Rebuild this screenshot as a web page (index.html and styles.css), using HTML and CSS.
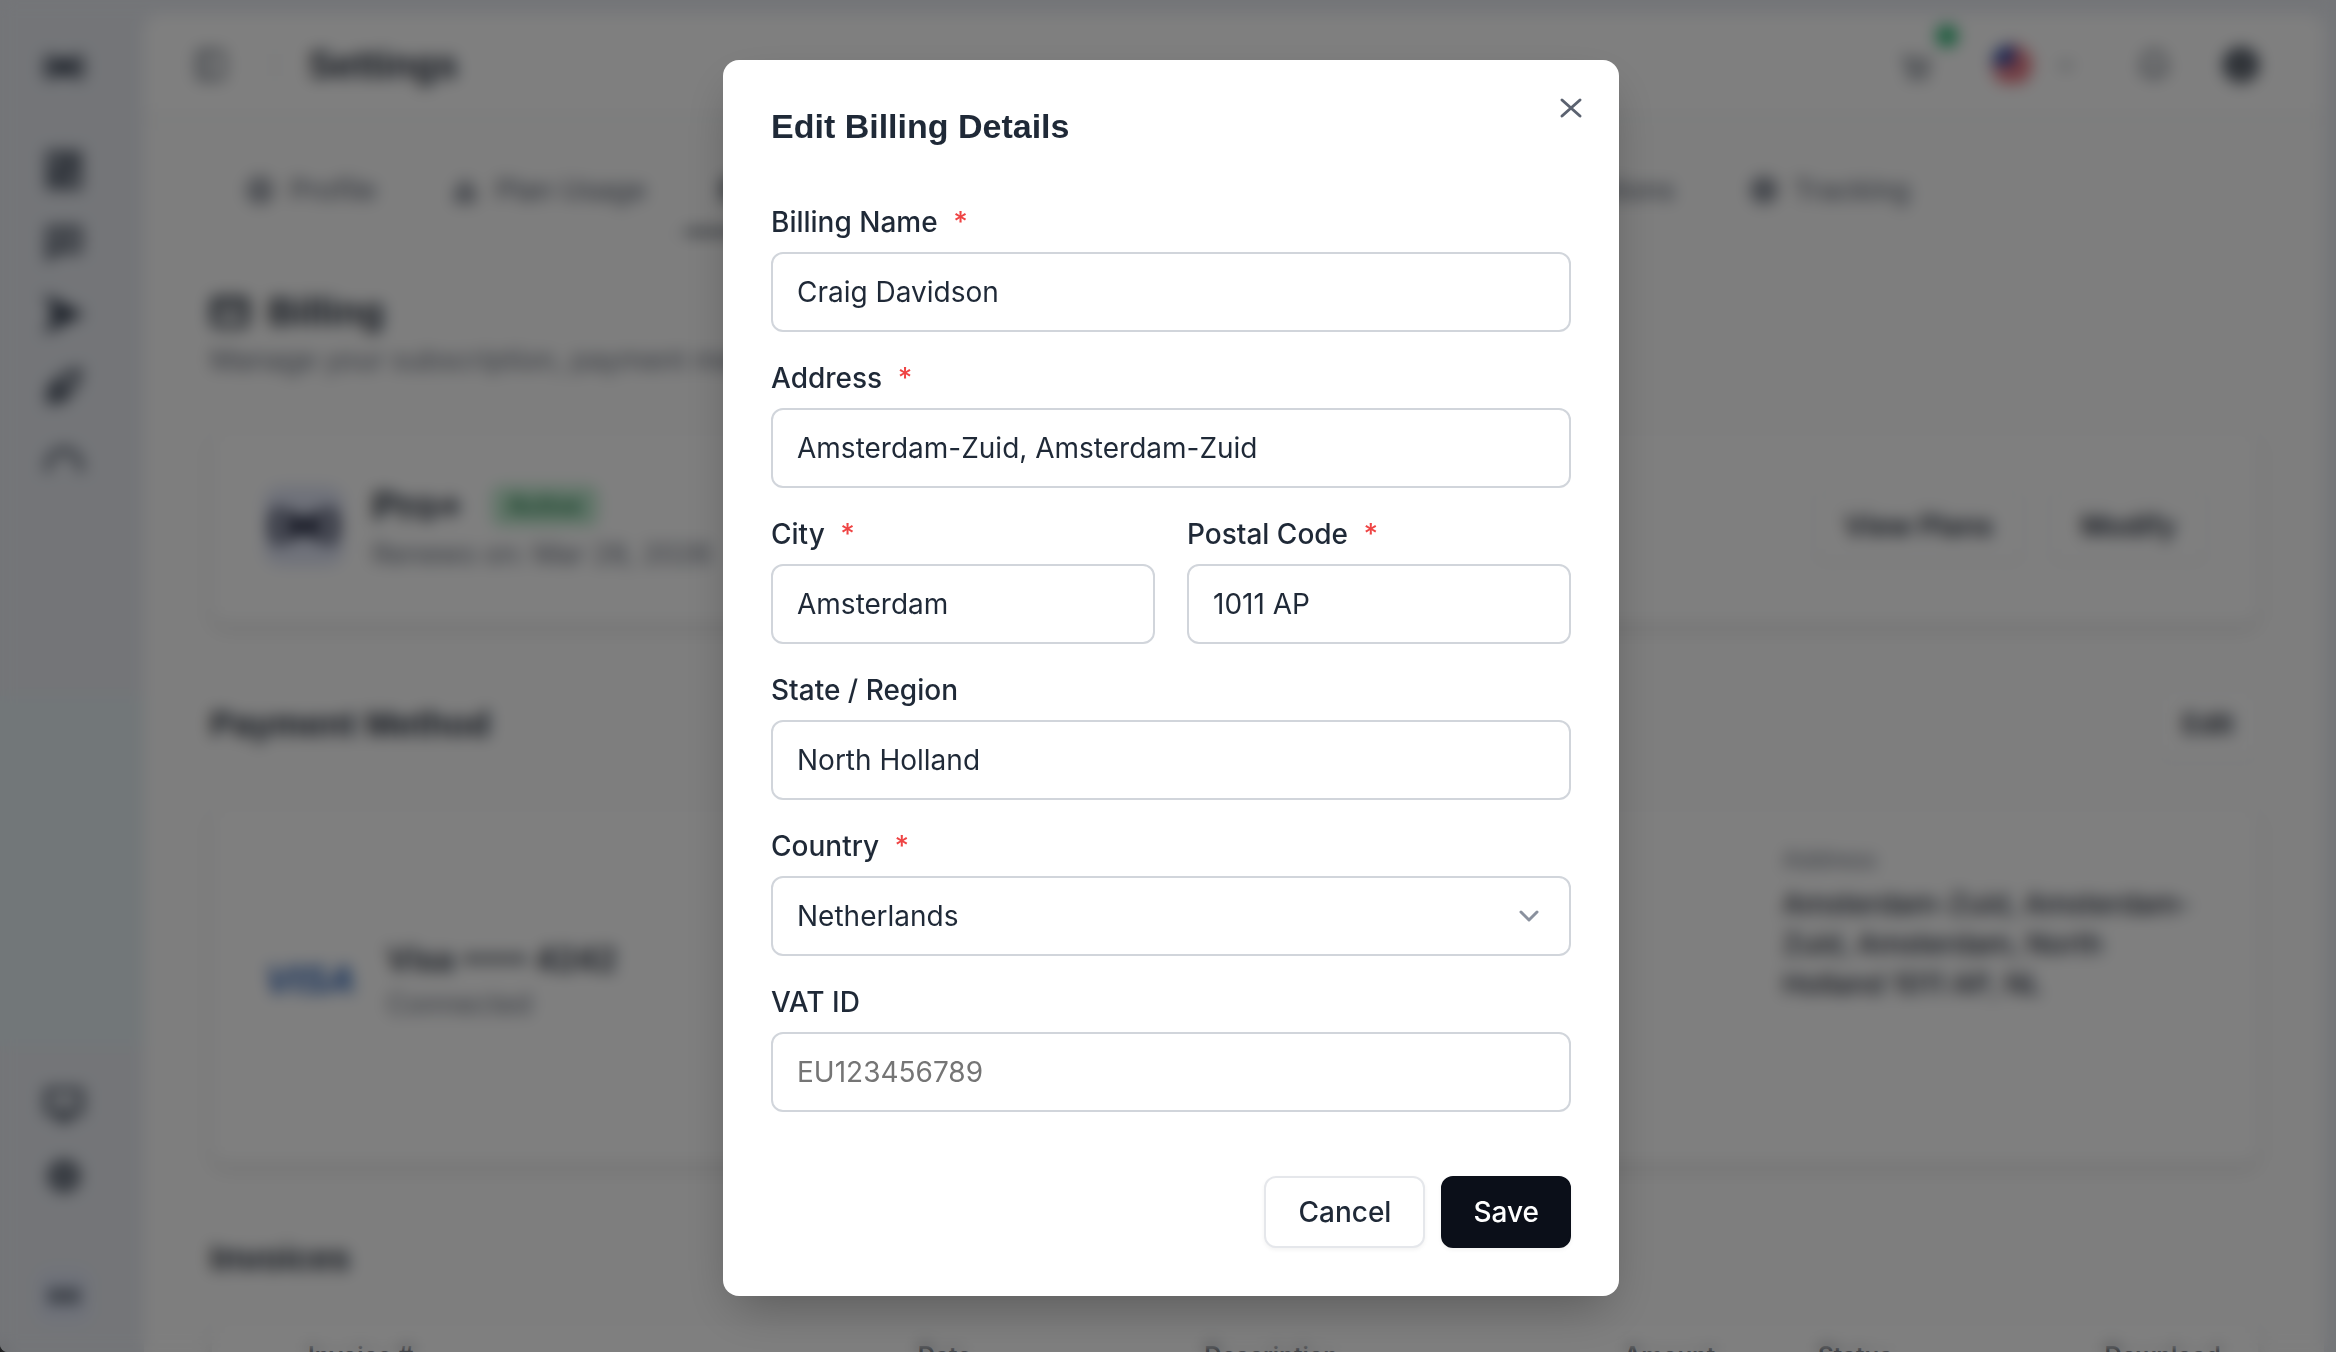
FILE: index.html
```html
<!DOCTYPE html>
<html lang="en">
<head>
	<meta charset="UTF-8">
	<title>Settings - Billing</title>
	<link rel="stylesheet" href="styles.css">
</head>
<body>

<div class="app">

	<!-- sidebar -->
	<aside class="sidebar">
		<a href="#" class="logo" aria-label="Home">
			<svg width="44" height="32" viewBox="0 0 44 32"><path d="M8 4C3 10 3 22 8 28M36 4c5 6 5 18 0 24" fill="none" stroke="currentColor" stroke-width="5"/><path d="M11 4l11 6 11-6v24l-11-6-11 6z" fill="currentColor"/></svg>
		</a>
		<nav class="nav">
			<a href="#" aria-label="Dashboard"><svg class="icon" viewBox="0 0 24 24"><rect x="3" y="2" width="7" height="10"/><rect x="14" y="2" width="7" height="6"/><rect x="14" y="12" width="7" height="10"/><rect x="3" y="16" width="7" height="6"/></svg></a>
			<a href="#" aria-label="Messages"><svg class="icon" viewBox="0 0 24 24"><path d="M3 21V4h18v13H7z"/><path d="M8 9h8M8 13h6"/></svg></a>
			<a href="#" aria-label="Campaigns"><svg class="icon" viewBox="0 0 24 24"><path d="M3 3l18 9-18 9 4-9zM7 12h14M6 8l8 4-8 4"/></svg></a>
			<a href="#" aria-label="Launch"><svg class="icon" viewBox="0 0 24 24"><path d="M21 3l-8 2-9 8 7 7 8-9zM4 13l-1 8 8-1M9 10l5 5M8 16l4-4"/></svg></a>
			<a href="#" aria-label="Reports"><svg class="icon" viewBox="0 0 24 24"><path d="M2 20c0-17 20-17 20 0"/></svg></a>
		</nav>
		<nav class="nav nav-bottom">
			<a href="#" aria-label="Help"><svg class="icon" viewBox="0 0 24 24"><path d="M2 4h20v13H2zM8 21h8M9 17l3 3 3-3"/></svg></a>
			<a href="#" aria-label="Settings"><svg class="icon" viewBox="0 0 24 24"><circle cx="12" cy="12" r="8"/><circle cx="12" cy="12" r="4"/></svg></a>
		</nav>
		<a href="#" class="account" aria-label="Account">
			<svg width="32" height="16" viewBox="0 0 32 16"><path d="M2 2h11v12H2zM19 2h11v12H19zM13 8h6" fill="currentColor" stroke="currentColor" stroke-width="2"/></svg>
		</a>
	</aside>

	<!-- content -->
	<main class="main">
		<header class="topbar">
			<button type="button" class="ghost" aria-label="Toggle sidebar"><svg class="icon thin" viewBox="0 0 24 24"><rect x="4" y="3" width="17" height="18" rx="2"/><path d="M10 3v18"/></svg></button>
			<span class="bar"></span>
			<h1>Settings</h1>
			<div class="tools">
				<button type="button" class="ghost cart" aria-label="Cart"><svg class="icon thin" viewBox="0 0 24 24"><path d="M3 7h3l2 9h10l2-7H7"/><circle cx="9" cy="20" r="1"/><circle cx="17" cy="20" r="1"/></svg><span class="dot"></span></button>
				<button type="button" class="ghost lang" aria-label="Language">
					<svg width="40" height="40" viewBox="0 0 40 40"><clipPath id="round"><circle cx="20" cy="20" r="20"/></clipPath><g clip-path="url(#round)"><path fill="#fff" d="M0 0h40v40H0z"/><path stroke="#dc2637" stroke-width="5" d="M0 2h40M0 10h40M0 18h40M0 26h40M0 34h40"/><path fill="#2a44a0" d="M0 0h22v20H0z"/></g></svg>
					<svg width="20" height="20" viewBox="0 0 24 24" class="caret"><path d="M5 9l7 7 7-7"/></svg>
				</button>
				<button type="button" class="ghost" aria-label="Notifications"><svg class="icon thin" viewBox="0 0 24 24"><path d="M5 17V10a7 7 0 0 1 14 0v7zM3 17h18M10 21h4"/></svg></button>
				<button type="button" class="ghost user" aria-label="Profile"><svg width="38" height="38" viewBox="0 0 38 38"><circle cx="19" cy="19" r="18" fill="currentColor"/><circle cx="19" cy="15" r="5" fill="#888"/><path d="M9 30c2-9 18-9 20 0z" fill="#888"/></svg></button>
			</div>
		</header>

		<div class="page">
			<nav class="tabs">
				<a href="#"><svg class="icon" viewBox="0 0 24 24"><circle cx="12" cy="12" r="10"/><circle cx="12" cy="10" r="3"/><path d="M6 19c2-5 10-5 12 0"/></svg>Profile</a>
				<a href="#"><svg class="icon" viewBox="0 0 24 24"><path d="M3 21h18M5 21v-8h4M9 21V6h6v15M15 12h4v9"/></svg>Plan Usage</a>
				<a href="#" class="active"><svg class="icon" viewBox="0 0 24 24"><rect x="2" y="4" width="20" height="16" rx="2"/><path d="M2 10h20"/></svg>Billing</a>
				<a href="#"><svg class="icon" viewBox="0 0 24 24"><circle cx="12" cy="12" r="9"/></svg>Notifications</a>
				<a href="#"><svg class="icon" viewBox="0 0 24 24"><circle cx="12" cy="12" r="9"/></svg>Webhooks</a>
				<a href="#"><svg class="icon" viewBox="0 0 24 24"><path d="M9 3v6M15 3v6M6 9h12v4a6 6 0 0 1-12 0zM12 19v3"/></svg>Integrations</a>
				<a href="#"><svg class="icon" viewBox="0 0 24 24"><circle cx="12" cy="12" r="10"/><circle cx="12" cy="12" r="6"/><circle cx="12" cy="12" r="2"/></svg>Tracking</a>
			</nav>

			<div class="intro">
				<h2><svg class="icon" viewBox="0 0 24 24"><rect x="2" y="4" width="20" height="16" rx="2"/><path d="M2 10h20"/></svg>Billing</h2>
				<p>Manage your subscription, payment methods, and invoices.</p>
			</div>

			<section class="card plan">
				<div class="plan-logo">
					<svg width="72" height="42" viewBox="0 0 72 42"><path d="M12 3C3 12 3 30 12 39M60 3c9 9 9 27 0 36" fill="none" stroke="currentColor" stroke-width="8"/><path d="M18 3l18 11L54 3v36L36 28 18 39z" fill="currentColor"/></svg>
				</div>
				<div class="plan-info">
					<div class="plan-name">Pro+ <span class="badge">Active</span></div>
					<p>Renews on: Mar 28, 2026</p>
				</div>
				<div class="actions">
					<button type="button" class="btn bold">View Plans</button>
					<button type="button" class="btn bold">Modify</button>
				</div>
			</section>

			<div class="section-head">
				<h3>Payment Method</h3>
				<button type="button" class="btn bold small">Edit</button>
			</div>

			<section class="card payment">
				<div class="method">
					<span class="visa">VISA</span>
					<div>
						<strong>Visa •••• 4242</strong>
						<p>Connected</p>
					</div>
				</div>
				<div class="address">
					<span>Address</span>
					<strong>Amsterdam-Zuid, Amsterdam-Zuid, Amsterdam, North Holland 1011 AP, NL</strong>
				</div>
			</section>

			<div class="section-head invoices-head">
				<h3>Invoices</h3>
			</div>

			<section class="card invoices">
				<table>
					<thead>
						<tr>
							<th class="c-id">Invoice #</th>
							<th class="c-date">Date</th>
							<th class="c-desc">Description</th>
							<th class="c-amount">Amount</th>
							<th class="c-status">Status</th>
							<th>Download</th>
						</tr>
					</thead>
				</table>
			</section>
		</div>
	</main>
</div>

<!-- dialog -->
<div class="overlay">
	<form class="dialog" role="dialog" aria-modal="true" aria-labelledby="dialogTitle">
		<button type="button" class="close" aria-label="Close">
			<svg width="32" height="32" viewBox="0 0 32 32"><path d="M7 8l18 16M25 8L7 24"/></svg>
		</button>
		<h2 id="dialogTitle">Edit Billing Details</h2>

		<div class="fields">
			<div class="field wide">
				<label for="name">Billing Name <span class="req">*</span></label>
				<input type="text" id="name" value="Craig Davidson">
			</div>
			<div class="field wide">
				<label for="address">Address <span class="req">*</span></label>
				<input type="text" id="address" value="Amsterdam-Zuid, Amsterdam-Zuid">
			</div>
			<div class="field">
				<label for="city">City <span class="req">*</span></label>
				<input type="text" id="city" value="Amsterdam">
			</div>
			<div class="field">
				<label for="postal">Postal Code <span class="req">*</span></label>
				<input type="text" id="postal" value="1011 AP">
			</div>
			<div class="field wide">
				<label for="state">State / Region</label>
				<input type="text" id="state" value="North Holland">
			</div>
			<div class="field wide">
				<label for="country">Country <span class="req">*</span></label>
				<div class="select">
					<select id="country">
						<option>Netherlands</option>
					</select>
					<svg width="32" height="32" viewBox="0 0 32 32"><path d="M8 12l8 8 8-8"/></svg>
				</div>
			</div>
			<div class="field wide">
				<label for="vat">VAT ID</label>
				<input type="text" id="vat" placeholder="EU123456789">
			</div>
		</div>

		<div class="buttons">
			<button type="button" class="btn cancel">Cancel</button>
			<button type="submit" class="btn primary">Save</button>
		</div>
	</form>
</div>

</body>
</html>
```
FILE: styles.css
```css
* {
	box-sizing: border-box;
}
body,
h1,
h2,
h3,
p {
	margin: 0;
}
body {
	height: 100vh;
	overflow: hidden;
	background: #000;
	color: #1f2937;
	font-family: Inter, sans-serif;
	font-size: 28px;
	line-height: 40px;
}
h1,
h2,
h3,
.plan-name {
	font-family: "Liberation Sans", Arial, sans-serif;
	font-weight: bold;
}
a {
	color: inherit;
	text-decoration: none;
}
button,
input,
select {
	font: inherit;
	color: inherit;
}
.icon {
	width: 40px;
	height: 40px;
	fill: none;
	stroke: currentColor;
	stroke-width: 3;
}
.thin {
	width: 36px;
	height: 36px;
	stroke-width: 2;
}

/* layout */
.app {
	display: flex;
	height: 100vh;
	overflow: hidden;
	border-radius: 0 0 0 8px;
	background: #e8ebf1;
}
.sidebar {
	display: flex;
	flex-direction: column;
	align-items: center;
	width: 144px;
	padding: 0 16px 30px 0;
	background: linear-gradient(#e8ebf1 696px, #e4eef2 696px, #e4eef2 1046px, #e8ebf1 1046px);
	color: #374151;
}
.logo {
	display: flex;
	align-items: center;
	height: 134px;
}
.nav a {
	display: flex;
	align-items: center;
	height: 72px;
}
.nav-bottom {
	margin-top: auto;
}
.account {
	display: flex;
	align-items: center;
	justify-content: center;
	width: 52px;
	height: 52px;
	margin-top: 58px;
	border-radius: 12px;
	background: #dfe5f5;
	color: #5b6472;
}
.main {
	flex: 1;
	margin: 14px 12px 0 0;
	border-radius: 16px 16px 0 0;
	background: #fdfdfd;
	overflow: hidden;
}
.topbar {
	display: flex;
	align-items: center;
	height: 104px;
	padding: 0 64px 0 48px;
	border-bottom: 2px solid #e5e7eb;
	background: #fff;
}
.topbar h1 {
	font-size: 38px;
}
.ghost {
	display: flex;
	align-items: center;
	padding: 0;
	border: 0;
	background: none;
	color: #4b5563;
}
.bar {
	width: 2px;
	height: 32px;
	margin: 0 32px 0 46px;
	background: #e5e7eb;
}
.tools {
	display: flex;
	align-items: center;
	margin-left: auto;
}
.cart {
	position: relative;
	margin-right: 58px;
}
.dot {
	position: absolute;
	top: -22px;
	right: -24px;
	width: 22px;
	height: 22px;
	border-radius: 50%;
	background: #2bb673;
}
.lang {
	gap: 24px;
	margin-right: 60px;
}
.caret {
	fill: none;
	stroke: #6b7280;
	stroke-width: 3;
}
.user {
	margin-left: 50px;
	color: #4b5563;
}

/* page */
.page {
	padding: 32px 64px 0 66px;
}
.tabs {
	display: flex;
	gap: 3px;
	border-bottom: 2px solid #f0f1f3;
	color: #6b7280;
	font-weight: 500;
}
.tabs a {
	display: flex;
	align-items: center;
	gap: 16px;
	height: 84px;
	padding: 0 36px;
	border-bottom: 4px solid transparent;
}
.tabs .active {
	border-color: #1f2937;
	color: #1f2937;
}
.tabs .icon {
	width: 28px;
	height: 28px;
}
.intro {
	padding: 48px 0;
}
.intro h2 {
	display: flex;
	align-items: center;
	gap: 18px;
	font-size: 38px;
	line-height: 56px;
}
p {
	color: #6b7280;
}
.card {
	border: 2px solid #f0f1f3;
	border-radius: 16px;
	background: #fff;
	box-shadow: 0 6px 12px rgba(0, 0, 0, 0.1);
}
.plan {
	display: flex;
	align-items: center;
	gap: 28px;
	padding: 48px 50px 48px 52px;
}
.plan-logo {
	display: flex;
	align-items: center;
	justify-content: center;
	width: 80px;
	height: 80px;
	border-radius: 16px;
	background: #dfe4f5;
	color: #33384f;
}
.plan-name {
	display: flex;
	align-items: center;
	gap: 30px;
	font-size: 40px;
	line-height: 56px;
}
.badge {
	padding: 0 16px;
	border-radius: 8px;
	background: #c0ebd0;
	color: #227a4a;
	font: 600 24px/40px Inter, sans-serif;
}
.actions {
	display: flex;
	gap: 24px;
	margin-left: auto;
}
.section-head {
	display: flex;
	align-items: center;
	justify-content: space-between;
	height: 72px;
	margin: 64px 0 44px;
}
.section-head h3 {
	font-size: 35px;
}
.payment {
	display: flex;
	justify-content: space-between;
	min-height: 360px;
}
.method {
	display: flex;
	align-items: center;
	gap: 32px;
	padding: 0 0 8px 54px;
}
.method strong {
	font-size: 32px;
	font-weight: 600;
	line-height: 48px;
}
.visa {
	color: #1a56b0;
	font: italic bold 38px/52px "Liberation Sans", Arial, sans-serif;
}
.address {
	width: 25%;
	padding: 34px 64px 34px 36px;
}
.address span,
.address strong {
	display: block;
}
.address span {
	margin-bottom: 4px;
	color: #6b7280;
	font-size: 24px;
}
.address strong {
	font-weight: 500;
}
.invoices-head {
	margin: 58px 0 24px;
}
.invoices table {
	width: 100%;
	border-collapse: collapse;
	table-layout: fixed;
}
.invoices th {
	height: 72px;
	padding: 0;
	text-align: left;
	font-size: 24px;
	font-weight: 600;
}
.invoices .c-id {
	width: 34.5%;
	padding-left: 96px;
}
.c-date {
	width: 14%;
}
.c-desc {
	width: 20.5%;
}
.c-amount {
	width: 9.5%;
}
.c-status {
	width: 14%;
}

/* dialog */
.overlay {
	position: fixed;
	inset: 0;
	display: flex;
	align-items: center;
	justify-content: center;
	padding: 4px 0 0 6px;
	background: rgba(0, 0, 0, 0.5);
	backdrop-filter: blur(8px);
}
.dialog {
	position: relative;
	width: 896px;
	padding: 48px;
	border-radius: 16px;
	background: #fff;
	box-shadow: 0 20px 50px -12px rgba(0, 0, 0, 0.3);
}
.dialog h2 {
	margin-bottom: 58px;
	font-size: 34px;
	line-height: 36px;
}
.close {
	position: absolute;
	top: 32px;
	right: 32px;
	display: flex;
	padding: 0;
	border: 0;
	background: none;
}
.close path,
.select path {
	fill: none;
	stroke: #5b6270;
	stroke-width: 3;
	stroke-linecap: round;
	stroke-linejoin: round;
}
.select path {
	stroke: #8a919e;
}
.fields {
	display: grid;
	grid-template-columns: 1fr 1fr;
	gap: 26px 32px;
}
.wide {
	grid-column: 1 / -1;
}
.field label {
	display: block;
	margin-bottom: 10px;
	font-weight: 500;
}
.req {
	margin-left: 8px;
	color: #ef4444;
}
.field input,
.field select {
	display: block;
	width: 100%;
	height: 80px;
	padding: 0 24px;
	border: 2px solid #d1d5db;
	border-radius: 12px;
	background: #fff;
	appearance: none;
	outline: none;
}
.field input::placeholder {
	color: #757575;
}
.select {
	position: relative;
}
.select svg {
	position: absolute;
	top: 24px;
	right: 26px;
	pointer-events: none;
}
.buttons {
	display: flex;
	justify-content: flex-end;
	gap: 16px;
	margin-top: 64px;
}
.btn {
	height: 72px;
	padding: 0 30px;
	border: 2px solid #e5e7eb;
	border-radius: 12px;
	background: #fff;
	box-shadow: 0 2px 4px rgba(0, 0, 0, 0.05);
	font-weight: 500;
}
.cancel {
	padding: 0 32px;
}
.bold {
	border-color: #f3f4f6;
	font-weight: 600;
}
.small {
	padding: 0 24px;
}
.primary {
	border-color: #0b0f19;
	background: #0b0f19;
	color: #fff;
}
```
